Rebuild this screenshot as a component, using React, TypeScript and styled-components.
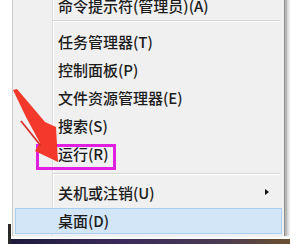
import React from "react";
import styled, { createGlobalStyle } from "styled-components";

const GlobalStyle = createGlobalStyle`
  html, body {
    margin: 0;
    padding: 0;
    background: #ffffff;
    overflow: hidden;
  }
`;

const menuItems = [
  { label: "任务管理器(T)" },
  { label: "控制面板(P)" },
  { label: "文件资源管理器(E)" },
  { label: "搜索(S)" },
  { label: "运行(R)", marked: true },
];

function App() {
  return (
    <>
      <GlobalStyle />
      <Screen>
        <Menu>
          <Item>命令提示符(管理员)(A)</Item>
          <Separator $offset={0} $height={8} />
          {menuItems.map((every) => (
            <Item key={every.label}>
              {every.label}
              {every.marked && <MarkBox />}
            </Item>
          ))}
          <Separator $offset={5} $height={11} />
          <Item>
            关机或注销(U)
            <SubArrow />
          </Item>
          <Item $active>桌面(D)</Item>
        </Menu>
        <Taskbar />

        {/* red hand-drawn arrow pointing at 运行 */}
        <ArrowLayer width="300" height="244" viewBox="0 0 300 244">
          <polygon
            points="13,90 17,89 45,122 56,127 58,162 35,151 40,143 26,117"
            fill="#f2392c"
          />
          <line
            x1="21"
            y1="121"
            x2="41"
            y2="146"
            stroke="#d9302a"
            strokeWidth="1.8"
          />
        </ArrowLayer>
      </Screen>
    </>
  );
}

const Screen = styled.div`
  position: relative;
  width: 300px;
  height: 244px;
  overflow: hidden;
  background: #ffffff;
  font-family: "Noto Sans CJK SC", "Noto Sans", sans-serif;

  &::before {
    content: "";
    position: absolute;
    left: 8px;
    top: 224px;
    width: 3px;
    height: 20px;
    background: #2a2a2a;
  }
`;

const Menu = styled.div`
  display: flex;
  flex-direction: column;
  margin: -8px 0 0 12px;
  width: 271px;
  padding-bottom: 1px;
  border-left: 1px solid #cbcbcb;
  border-right: 1px solid #8f8f8f;
  box-shadow: 2px 0 0 #b8b8b8, 4px 0 2px rgba(0, 0, 0, 0.18);
  background:
    linear-gradient(
      to right,
      transparent 39px,
      #dcdcdc 39px,
      #dcdcdc 40px,
      #ffffff 40px,
      #ffffff 41px,
      transparent 41px
    ),
    #f0f0f0;
`;

const Item = styled.div<{ $active?: boolean }>`
  position: relative;
  display: flex;
  align-items: center;
  justify-content: space-between;
  height: ${(p) => (p.$active ? "26px" : "28px")};
  margin: ${(p) => (p.$active ? "1px 2px 1px 2px" : "0")};
  padding: 0 15px 2px ${(p) => (p.$active ? "42px" : "45px")};
  font-size: 15px;
  font-weight: 500;
  color: #1c1c1c;
  white-space: nowrap;
  box-sizing: border-box;
  border: ${(p) => (p.$active ? "1px solid #a9d0f0" : "none")};
  background: ${(p) => (p.$active ? "#d3e6f8" : "transparent")};
`;

const Separator = styled.div<{ $offset: number; $height: number }>`
  height: ${(p) => p.$height}px;
  padding-top: ${(p) => p.$offset}px;
  margin: 0 4px 0 40px;
  box-sizing: border-box;

  &::after {
    content: "";
    display: block;
    height: 1px;
    background: #d7d7d7;
    border-bottom: 1px solid #ffffff;
  }
`;

const SubArrow = styled.span`
  width: 0;
  height: 0;
  border-left: 4px solid #111;
  border-top: 3.5px solid transparent;
  border-bottom: 3.5px solid transparent;
`;

const MarkBox = styled.span`
  position: absolute;
  left: 23px;
  top: 4px;
  width: 80px;
  height: 26px;
  box-sizing: border-box;
  border: 3px solid #e11fe0;
`;

const Taskbar = styled.div`
  margin-top: 3px;
  height: 6px;
  background: linear-gradient(
    to right,
    #ffffff 0px,
    #ffffff 10px,
    #1e1a3c 10px,
    #3b2a5c 120px,
    #4a3a52 220px,
    #6a5030 290px,
    #ffffff 290px
  );
`;

const ArrowLayer = styled.svg`
  position: absolute;
  left: 0;
  top: 0;
  pointer-events: none;
`;

export default App;
